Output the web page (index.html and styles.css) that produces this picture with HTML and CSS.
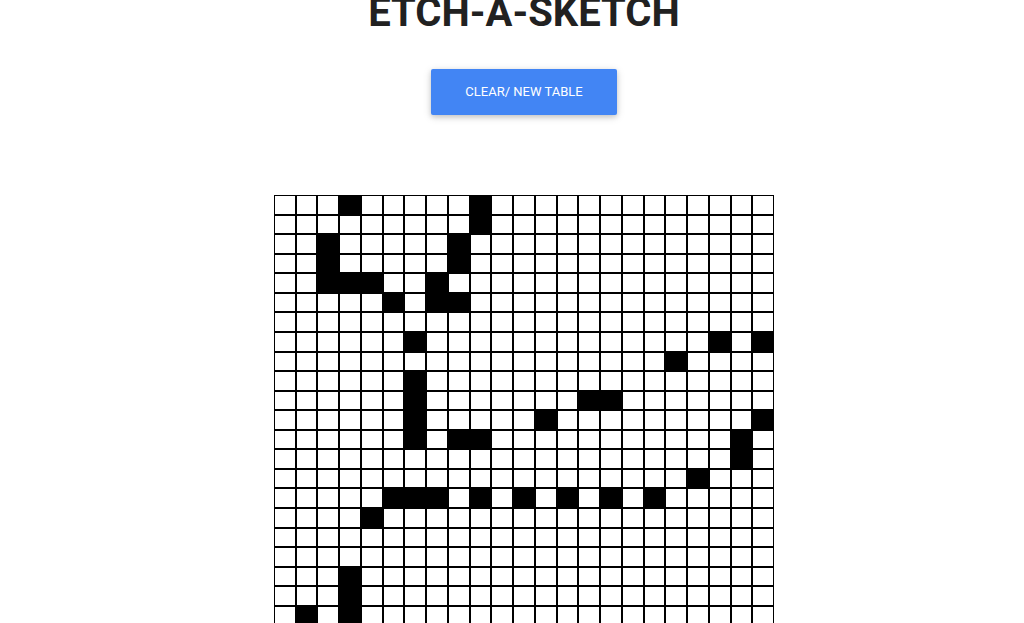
FILE: index.html
```html
<!DOCTYPE html>
<html lang="en">
<head>
<meta charset="utf-8">
<title>Etch-A-Sketch</title>
<link rel="stylesheet" href="styles.css">
</head>
<body>
<main class="page">
  <h1 class="title">ETCH-A-SKETCH</h1>
  <button class="btn" type="button">Clear/ New Table</button>
  <div class="grid">
    <!-- row 0 -->
    <div class="c"></div><div class="c"></div><div class="c"></div><div class="c on"></div><div class="c"></div><div class="c"></div><div class="c"></div><div class="c"></div><div class="c"></div><div class="c on"></div><div class="c"></div><div class="c"></div><div class="c"></div><div class="c"></div><div class="c"></div><div class="c"></div><div class="c"></div><div class="c"></div><div class="c"></div><div class="c"></div><div class="c"></div><div class="c"></div><div class="c"></div>
    <!-- row 1 -->
    <div class="c"></div><div class="c"></div><div class="c"></div><div class="c"></div><div class="c"></div><div class="c"></div><div class="c"></div><div class="c"></div><div class="c"></div><div class="c on"></div><div class="c"></div><div class="c"></div><div class="c"></div><div class="c"></div><div class="c"></div><div class="c"></div><div class="c"></div><div class="c"></div><div class="c"></div><div class="c"></div><div class="c"></div><div class="c"></div><div class="c"></div>
    <!-- row 2 -->
    <div class="c"></div><div class="c"></div><div class="c on"></div><div class="c"></div><div class="c"></div><div class="c"></div><div class="c"></div><div class="c"></div><div class="c on"></div><div class="c"></div><div class="c"></div><div class="c"></div><div class="c"></div><div class="c"></div><div class="c"></div><div class="c"></div><div class="c"></div><div class="c"></div><div class="c"></div><div class="c"></div><div class="c"></div><div class="c"></div><div class="c"></div>
    <!-- row 3 -->
    <div class="c"></div><div class="c"></div><div class="c on"></div><div class="c"></div><div class="c"></div><div class="c"></div><div class="c"></div><div class="c"></div><div class="c on"></div><div class="c"></div><div class="c"></div><div class="c"></div><div class="c"></div><div class="c"></div><div class="c"></div><div class="c"></div><div class="c"></div><div class="c"></div><div class="c"></div><div class="c"></div><div class="c"></div><div class="c"></div><div class="c"></div>
    <!-- row 4 -->
    <div class="c"></div><div class="c"></div><div class="c on"></div><div class="c on"></div><div class="c on"></div><div class="c"></div><div class="c"></div><div class="c on"></div><div class="c"></div><div class="c"></div><div class="c"></div><div class="c"></div><div class="c"></div><div class="c"></div><div class="c"></div><div class="c"></div><div class="c"></div><div class="c"></div><div class="c"></div><div class="c"></div><div class="c"></div><div class="c"></div><div class="c"></div>
    <!-- row 5 -->
    <div class="c"></div><div class="c"></div><div class="c"></div><div class="c"></div><div class="c"></div><div class="c on"></div><div class="c"></div><div class="c on"></div><div class="c on"></div><div class="c"></div><div class="c"></div><div class="c"></div><div class="c"></div><div class="c"></div><div class="c"></div><div class="c"></div><div class="c"></div><div class="c"></div><div class="c"></div><div class="c"></div><div class="c"></div><div class="c"></div><div class="c"></div>
    <!-- row 6 -->
    <div class="c"></div><div class="c"></div><div class="c"></div><div class="c"></div><div class="c"></div><div class="c"></div><div class="c"></div><div class="c"></div><div class="c"></div><div class="c"></div><div class="c"></div><div class="c"></div><div class="c"></div><div class="c"></div><div class="c"></div><div class="c"></div><div class="c"></div><div class="c"></div><div class="c"></div><div class="c"></div><div class="c"></div><div class="c"></div><div class="c"></div>
    <!-- row 7 -->
    <div class="c"></div><div class="c"></div><div class="c"></div><div class="c"></div><div class="c"></div><div class="c"></div><div class="c on"></div><div class="c"></div><div class="c"></div><div class="c"></div><div class="c"></div><div class="c"></div><div class="c"></div><div class="c"></div><div class="c"></div><div class="c"></div><div class="c"></div><div class="c"></div><div class="c"></div><div class="c"></div><div class="c on"></div><div class="c"></div><div class="c on"></div>
    <!-- row 8 -->
    <div class="c"></div><div class="c"></div><div class="c"></div><div class="c"></div><div class="c"></div><div class="c"></div><div class="c"></div><div class="c"></div><div class="c"></div><div class="c"></div><div class="c"></div><div class="c"></div><div class="c"></div><div class="c"></div><div class="c"></div><div class="c"></div><div class="c"></div><div class="c"></div><div class="c on"></div><div class="c"></div><div class="c"></div><div class="c"></div><div class="c"></div>
    <!-- row 9 -->
    <div class="c"></div><div class="c"></div><div class="c"></div><div class="c"></div><div class="c"></div><div class="c"></div><div class="c on"></div><div class="c"></div><div class="c"></div><div class="c"></div><div class="c"></div><div class="c"></div><div class="c"></div><div class="c"></div><div class="c"></div><div class="c"></div><div class="c"></div><div class="c"></div><div class="c"></div><div class="c"></div><div class="c"></div><div class="c"></div><div class="c"></div>
    <!-- row 10 -->
    <div class="c"></div><div class="c"></div><div class="c"></div><div class="c"></div><div class="c"></div><div class="c"></div><div class="c on"></div><div class="c"></div><div class="c"></div><div class="c"></div><div class="c"></div><div class="c"></div><div class="c"></div><div class="c"></div><div class="c on"></div><div class="c on"></div><div class="c"></div><div class="c"></div><div class="c"></div><div class="c"></div><div class="c"></div><div class="c"></div><div class="c"></div>
    <!-- row 11 -->
    <div class="c"></div><div class="c"></div><div class="c"></div><div class="c"></div><div class="c"></div><div class="c"></div><div class="c on"></div><div class="c"></div><div class="c"></div><div class="c"></div><div class="c"></div><div class="c"></div><div class="c on"></div><div class="c"></div><div class="c"></div><div class="c"></div><div class="c"></div><div class="c"></div><div class="c"></div><div class="c"></div><div class="c"></div><div class="c"></div><div class="c on"></div>
    <!-- row 12 -->
    <div class="c"></div><div class="c"></div><div class="c"></div><div class="c"></div><div class="c"></div><div class="c"></div><div class="c on"></div><div class="c"></div><div class="c on"></div><div class="c on"></div><div class="c"></div><div class="c"></div><div class="c"></div><div class="c"></div><div class="c"></div><div class="c"></div><div class="c"></div><div class="c"></div><div class="c"></div><div class="c"></div><div class="c"></div><div class="c on"></div><div class="c"></div>
    <!-- row 13 -->
    <div class="c"></div><div class="c"></div><div class="c"></div><div class="c"></div><div class="c"></div><div class="c"></div><div class="c"></div><div class="c"></div><div class="c"></div><div class="c"></div><div class="c"></div><div class="c"></div><div class="c"></div><div class="c"></div><div class="c"></div><div class="c"></div><div class="c"></div><div class="c"></div><div class="c"></div><div class="c"></div><div class="c"></div><div class="c on"></div><div class="c"></div>
    <!-- row 14 -->
    <div class="c"></div><div class="c"></div><div class="c"></div><div class="c"></div><div class="c"></div><div class="c"></div><div class="c"></div><div class="c"></div><div class="c"></div><div class="c"></div><div class="c"></div><div class="c"></div><div class="c"></div><div class="c"></div><div class="c"></div><div class="c"></div><div class="c"></div><div class="c"></div><div class="c"></div><div class="c on"></div><div class="c"></div><div class="c"></div><div class="c"></div>
    <!-- row 15 -->
    <div class="c"></div><div class="c"></div><div class="c"></div><div class="c"></div><div class="c"></div><div class="c on"></div><div class="c on"></div><div class="c on"></div><div class="c"></div><div class="c on"></div><div class="c"></div><div class="c on"></div><div class="c"></div><div class="c on"></div><div class="c"></div><div class="c on"></div><div class="c"></div><div class="c on"></div><div class="c"></div><div class="c"></div><div class="c"></div><div class="c"></div><div class="c"></div>
    <!-- row 16 -->
    <div class="c"></div><div class="c"></div><div class="c"></div><div class="c"></div><div class="c on"></div><div class="c"></div><div class="c"></div><div class="c"></div><div class="c"></div><div class="c"></div><div class="c"></div><div class="c"></div><div class="c"></div><div class="c"></div><div class="c"></div><div class="c"></div><div class="c"></div><div class="c"></div><div class="c"></div><div class="c"></div><div class="c"></div><div class="c"></div><div class="c"></div>
    <!-- row 17 -->
    <div class="c"></div><div class="c"></div><div class="c"></div><div class="c"></div><div class="c"></div><div class="c"></div><div class="c"></div><div class="c"></div><div class="c"></div><div class="c"></div><div class="c"></div><div class="c"></div><div class="c"></div><div class="c"></div><div class="c"></div><div class="c"></div><div class="c"></div><div class="c"></div><div class="c"></div><div class="c"></div><div class="c"></div><div class="c"></div><div class="c"></div>
    <!-- row 18 -->
    <div class="c"></div><div class="c"></div><div class="c"></div><div class="c"></div><div class="c"></div><div class="c"></div><div class="c"></div><div class="c"></div><div class="c"></div><div class="c"></div><div class="c"></div><div class="c"></div><div class="c"></div><div class="c"></div><div class="c"></div><div class="c"></div><div class="c"></div><div class="c"></div><div class="c"></div><div class="c"></div><div class="c"></div><div class="c"></div><div class="c"></div>
    <!-- row 19 -->
    <div class="c"></div><div class="c"></div><div class="c"></div><div class="c on"></div><div class="c"></div><div class="c"></div><div class="c"></div><div class="c"></div><div class="c"></div><div class="c"></div><div class="c"></div><div class="c"></div><div class="c"></div><div class="c"></div><div class="c"></div><div class="c"></div><div class="c"></div><div class="c"></div><div class="c"></div><div class="c"></div><div class="c"></div><div class="c"></div><div class="c"></div>
    <!-- row 20 -->
    <div class="c"></div><div class="c"></div><div class="c"></div><div class="c on"></div><div class="c"></div><div class="c"></div><div class="c"></div><div class="c"></div><div class="c"></div><div class="c"></div><div class="c"></div><div class="c"></div><div class="c"></div><div class="c"></div><div class="c"></div><div class="c"></div><div class="c"></div><div class="c"></div><div class="c"></div><div class="c"></div><div class="c"></div><div class="c"></div><div class="c"></div>
    <!-- row 21 -->
    <div class="c"></div><div class="c on"></div><div class="c"></div><div class="c on"></div><div class="c"></div><div class="c"></div><div class="c"></div><div class="c"></div><div class="c"></div><div class="c"></div><div class="c"></div><div class="c"></div><div class="c"></div><div class="c"></div><div class="c"></div><div class="c"></div><div class="c"></div><div class="c"></div><div class="c"></div><div class="c"></div><div class="c"></div><div class="c"></div><div class="c"></div>
    <!-- row 22 -->
    <div class="c"></div><div class="c"></div><div class="c"></div><div class="c"></div><div class="c"></div><div class="c"></div><div class="c"></div><div class="c"></div><div class="c"></div><div class="c"></div><div class="c"></div><div class="c"></div><div class="c"></div><div class="c"></div><div class="c"></div><div class="c"></div><div class="c"></div><div class="c"></div><div class="c"></div><div class="c"></div><div class="c"></div><div class="c"></div><div class="c"></div>
  </div>
</main>
</body>
</html>
```

FILE: styles.css
```css
html, body {
  margin: 0;
  padding: 0;
  background: #ffffff;
}

body {
  font-family: Roboto, "Liberation Sans", Arial, sans-serif;
}

.page {
  display: flex;
  flex-direction: column;
  align-items: center;
  padding-left: 24px;
  padding-bottom: 40px;
}

.title {
  margin: 0;
  font-family: Roboto, "Liberation Sans", Arial, sans-serif;
  font-weight: 700;
  font-size: 40px;
  line-height: 26px;
  color: #212121;
}

.btn {
  margin-top: 43px;
  height: 46px;
  padding: 0 34px;
  border: 0;
  border-radius: 2px;
  background: #4285f4;
  color: #ffffff;
  font-family: Roboto, "Liberation Sans", Arial, sans-serif;
  font-size: 13px;
  line-height: 16px;
  font-weight: 400;
  text-transform: uppercase;
  box-shadow: 0 2px 5px 0 rgba(0, 0, 0, 0.16), 0 2px 10px 0 rgba(0, 0, 0, 0.12);
  cursor: pointer;
}

.grid {
  margin-top: 80px;
  width: 500px;
  height: 450px;
  display: grid;
  grid-template-columns: repeat(23, 1fr);
  grid-template-rows: repeat(23, 1fr);
}

.c {
  box-sizing: border-box;
  border: 1px solid #000000;
  background: #000000;
  background: #ffffff;
}

.c.on {
  background: #000000;
}
```
